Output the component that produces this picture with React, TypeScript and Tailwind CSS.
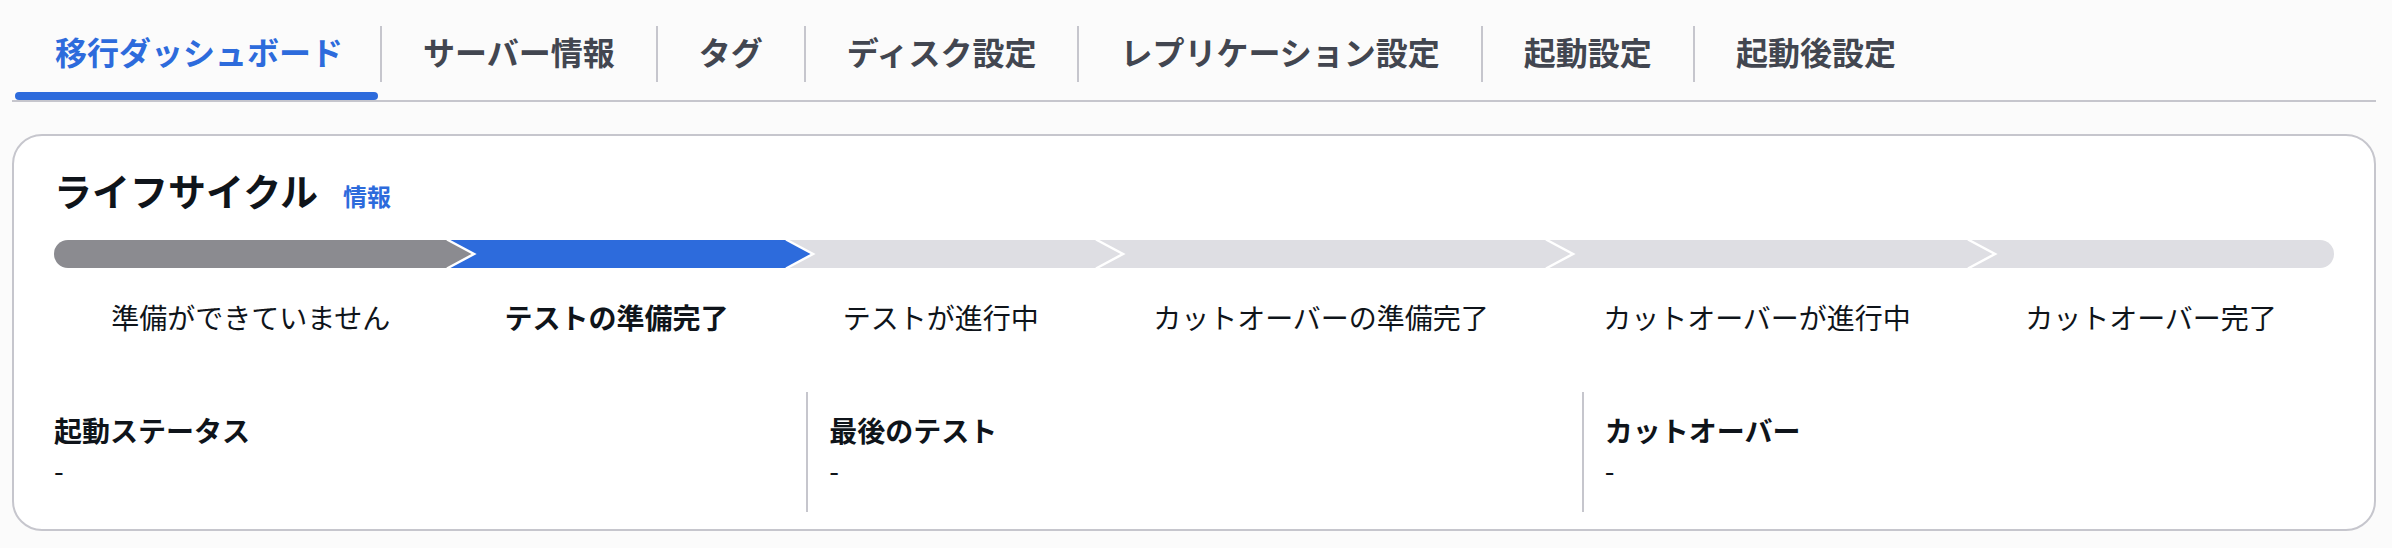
import React from 'react';

const tabs = [
  '移行ダッシュボード',
  'サーバー情報',
  'タグ',
  'ディスク設定',
  'レプリケーション設定',
  '起動設定',
  '起動後設定',
];

const steps = [
  { label: '準備ができていません', color: '#8b8b90', fill: 'bg-[#8b8b90]', current: false },
  { label: 'テストの準備完了', color: '#2d6bdc', fill: 'bg-[#2d6bdc]', current: true },
  { label: 'テストが進行中', color: '#dedee3', fill: 'bg-[#dedee3]', current: false },
  { label: 'カットオーバーの準備完了', color: '#dedee3', fill: 'bg-[#dedee3]', current: false },
  { label: 'カットオーバーが進行中', color: '#dedee3', fill: 'bg-[#dedee3]', current: false },
  { label: 'カットオーバー完了', color: '#dedee3', fill: 'bg-[#dedee3]', current: false },
];

const details = [
  { label: '起動ステータス', value: '-' },
  { label: '最後のテスト', value: '-' },
  { label: 'カットオーバー', value: '-' },
];

export default function App() {
  return (
    <div className="min-h-screen bg-[#fbfbfb] pl-[12px] pr-[16px] font-['Noto_Sans_CJK_JP',sans-serif] text-[#0f141a]">
      {/* Tabs */}
      <div className="flex border-b-2 border-[#c6c6cd]">
        {tabs.map((tab, i) => (
          <React.Fragment key={tab}>
            {i > 0 && <div className="mt-[26px] h-[56px] w-[2px] bg-[#c6c6cd]" />}
            <div className={i === 0 ? 'relative pl-[43px] pr-[37px] pt-[31px] pb-[29px]' : 'relative px-[41px] pt-[31px] pb-[29px]'}>
              <span
                className={
                  i === 0
                    ? 'text-[32px] leading-[40px] font-bold text-[#2d6bdc]'
                    : 'text-[32px] leading-[40px] font-bold text-[#424650]'
                }
              >
                {tab}
              </span>
              {i === 0 && (
                <div className="absolute bottom-0 left-[3px] right-[2px] h-[8px] rounded-[4px] bg-[#2d6bdc]" />
              )}
            </div>
          </React.Fragment>
        ))}
      </div>

      {/* Lifecycle card */}
      <div className="mt-[32px] rounded-[30px] border-2 border-[#c6c6cd] bg-white px-[40px] pt-[30px] pb-[17px]">
        <div className="flex items-baseline gap-[25px]">
          <h2 className="text-[38px] leading-[48px] font-bold">ライフサイクル</h2>
          <a className="text-[24px] leading-[32px] font-bold text-[#2d6bdc]">情報</a>
        </div>

        <div className="mt-[26px] flex">
          {steps.map((step, i) => (
            <div key={step.label} className="flex flex-auto flex-col">
              <div
                className={
                  'relative h-[28px] ' +
                  step.fill +
                  (i === 0 ? ' rounded-l-full' : '') +
                  (i === steps.length - 1 ? ' rounded-r-full' : '')
                }
              >
                {i < steps.length - 1 && (
                  <svg
                    className="absolute left-full top-0 z-10 overflow-visible"
                    width="28"
                    height="28"
                    viewBox="0 0 28 28"
                  >
                    <polygon points="0,0 27,14 0,28" fill={step.color} />
                    <polyline points="0,-0.5 27,14 0,28.5" fill="none" stroke="#ffffff" strokeWidth="2.5" />
                  </svg>
                )}
              </div>
              <div
                className={
                  'mt-[29px] px-[54px] text-center text-[28px] leading-[40px] whitespace-nowrap' +
                  (step.current ? ' font-bold' : '')
                }
              >
                {step.label}
              </div>
            </div>
          ))}
        </div>

        {/* Key values */}
        <div className="mt-[55px] -mx-[23px] grid grid-cols-3">
          {details.map((d, i) => (
            <div
              key={d.label}
              className={
                i === 0
                  ? 'px-[23px] pt-[18px] pb-[22px]'
                  : 'border-l-2 border-[#c6c6cd] pl-[21px] pr-[23px] pt-[18px] pb-[22px]'
              }
            >
              <div className="text-[28px] leading-[40px] font-bold">{d.label}</div>
              <div className="text-[28px] leading-[40px]">{d.value}</div>
            </div>
          ))}
        </div>
      </div>
    </div>
  );
}
